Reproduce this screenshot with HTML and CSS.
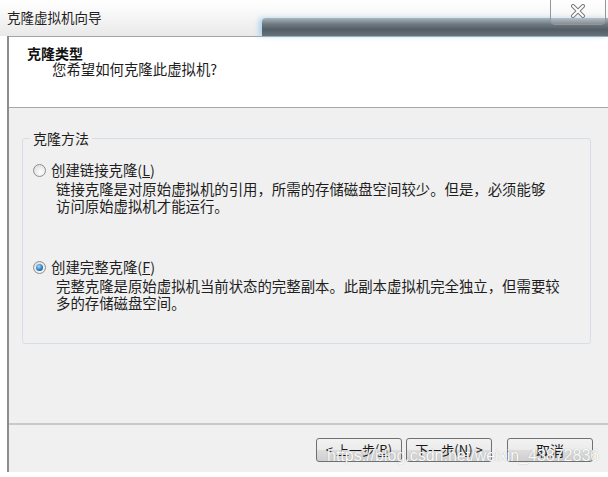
FILE: index.html
```html
<!DOCTYPE html>
<html lang="zh-CN">
<head>
    <meta charset="UTF-8">
    <title>克隆虚拟机向导</title>
    <link rel="stylesheet" href="styles.css">
</head>
<body>

    <div class="titlebar">
        <span class="title">克隆虚拟机向导</span>
        <div class="glass"></div>
        <div class="close">
            <svg width="16" height="14" viewBox="0 0 16 14">
                <path d="M3 2 L13 12 M13 2 L3 12" stroke="#7c7c7c" stroke-width="4" stroke-linecap="round"/>
                <path d="M3 2 L13 12 M13 2 L3 12" stroke="#ffffff" stroke-width="2" stroke-linecap="round"/>
            </svg>
        </div>
    </div>

    <div class="wizard">
        <div class="header">
            <div class="header-title">克隆类型</div>
            <div class="header-sub">您希望如何克隆此虚拟机?</div>
        </div>

        <div class="content">
            <fieldset class="group">
                <legend>克隆方法</legend>

                <div class="option">
                    <label class="radio-row"><span class="radio"></span>创建链接克隆(<u>L</u>)</label>
                    <p class="desc">链接克隆是对原始虚拟机的引用，所需的存储磁盘空间较少。但是，必须能够<br>访问原始虚拟机才能运行。</p>
                </div>

                <div class="option second">
                    <label class="radio-row"><span class="radio checked"></span>创建完整克隆(<u>F</u>)</label>
                    <p class="desc">完整克隆是原始虚拟机当前状态的完整副本。此副本虚拟机完全独立，但需要较<br>多的存储磁盘空间。</p>
                </div>
            </fieldset>
        </div>

        <div class="footer">
            <button class="btn">&lt; 上一步(<u>B</u>)</button>
            <button class="btn next">下一步(<u>N</u>) &gt;</button>
            <button class="btn cancel">取消</button>
        </div>
    </div>

    <div class="watermark">https://blog.csdn.net/weixin_43872836</div>

</body>
</html>
```

FILE: styles.css
```css
body {
    margin: 0;
    padding: 0;
    background-color: #fff;
    font-family: "Noto Sans CJK SC", "Liberation Sans", sans-serif;
    font-size: 14.4px;
    color: #1e1e1e;
    position: relative;
    height: 477px;
    overflow: hidden;
}
.titlebar {
    display: flex;
    align-items: flex-start;
    height: 36px;
    background: linear-gradient(#ffffff, #f7f7f7 40%, #e9e9e9);
}
.title {
    flex: 0 0 255px;
    padding-left: 7px;
    margin-top: 9px;
    font-size: 13.5px;
    line-height: 16px;
    color: #222;
}
.glass {
    flex: 1;
    margin-top: 18px;
    height: 18px;
    background: linear-gradient(#aab4bc, #6d7881 35%, #525d66 65%, #66717a);
    box-shadow: -3px 0 5px rgba(140, 200, 235, 0.7);
    border-top-left-radius: 4px;
}
.close {
    position: absolute;
    left: 550px;
    top: 0;
    width: 56px;
    height: 25px;
    border: 1px solid #959595;
    border-top: none;
    border-radius: 0 0 5px 5px;
    background: rgba(255, 255, 255, 0.15);
    display: flex;
    justify-content: center;
    padding-top: 4px;
    box-sizing: border-box;
}
.wizard {
    margin-left: 7px;
    border-left: 2px solid #8d8d8d;
    height: 436px;
    background-color: #f0f0f0;
}
.header {
    height: 70px;
    background-color: #fff;
    border-top: 1px solid #a3a3a3;
    border-bottom: 1px solid #a8a8a8;
    padding-left: 18px;
}
.header-title {
    padding-top: 8px;
    font-size: 14px;
    font-weight: bold;
    line-height: 16px;
    color: #111;
}
.header-sub {
    margin-left: 25px;
    line-height: 16px;
}
.content {
    height: 315px;
    padding: 22px 17px 0 13px;
    box-sizing: border-box;
}
.group {
    margin: 0;
    padding: 0 0 30px 0;
    border: 1px solid #d5dfe5;
    border-radius: 3px;
    height: 214px;
    box-sizing: border-box;
}
.group legend {
    margin-left: 7px;
    padding: 0 3px;
    font-size: 14px;
    line-height: 16px;
}
.option {
    margin-top: 15px;
    padding-left: 10px;
}
.option.second {
    margin-top: 44px;
}
.radio-row {
    display: flex;
    align-items: center;
    line-height: 18px;
}
.radio {
    width: 11px;
    height: 11px;
    margin-right: 5px;
    border: 1px solid #8e8f8f;
    border-radius: 50%;
    background: radial-gradient(circle at 60% 65%, #ffffff, #e2e2e2 70%, #cfcfcf);
    position: relative;
}
.radio.checked::after {
    content: "";
    position: absolute;
    left: 2px;
    top: 2px;
    width: 7px;
    height: 7px;
    border-radius: 50%;
    background: radial-gradient(circle at 40% 35%, #a9dcf8, #2a7fc6 55%, #0d3f74);
}
.desc {
    margin: 1px 0 0 23px;
    line-height: 17px;
}
.footer {
    border-top: 2px solid #c9c9c9;
    display: flex;
    justify-content: flex-end;
    padding: 13px 15px 0 0;
}
.btn {
    width: 86px;
    height: 24px;
    margin: 0;
    padding: 0;
    white-space: nowrap;
    font-family: "Noto Sans CJK SC", sans-serif;
    font-size: 13px;
    line-height: 20px;
    color: #1a1a1a;
    border: 1px solid #707070;
    border-radius: 3px;
    background: linear-gradient(#f2f2f2, #ebebeb 50%, #dddddd 51%, #cfcfcf);
}
.btn.next {
    margin-left: 4px;
}
.btn.cancel {
    margin-left: 15px;
    font-size: 14px;
}
.watermark {
    position: absolute;
    left: 327px;
    top: 447px;
    font-family: "Liberation Sans", Arial, sans-serif;
    font-size: 16px;
    line-height: 18px;
    color: rgba(255, 255, 255, 0.95);
    text-shadow: 0 0 1px rgba(120, 120, 120, 0.6);
}
```
